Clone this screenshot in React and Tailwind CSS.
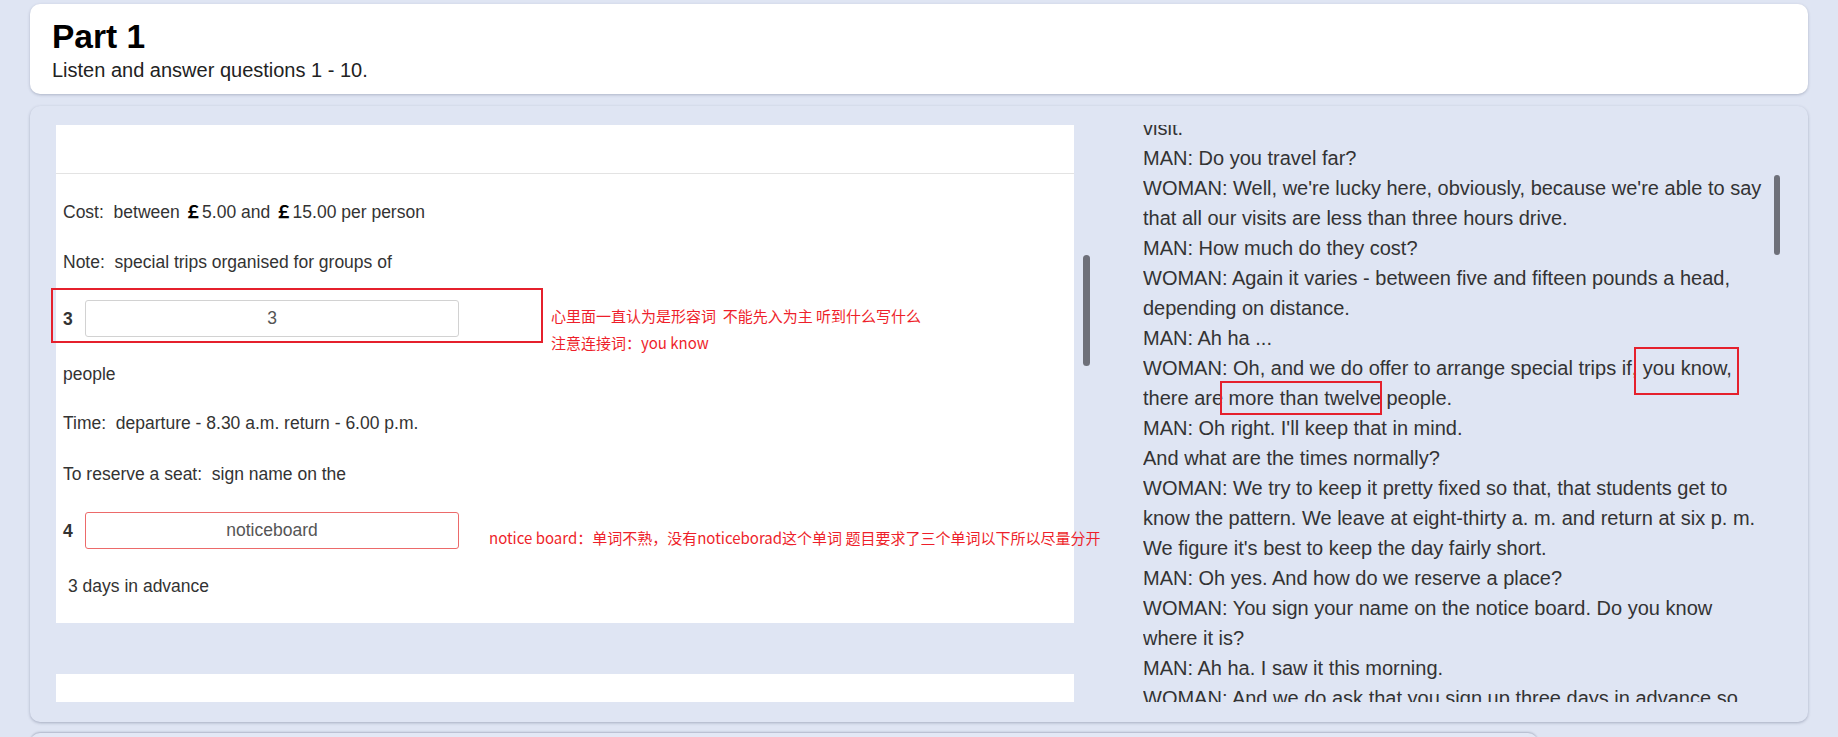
import React from "react";

const SANS = "font-['Liberation_Sans',Arial,sans-serif]";
const CJK = "font-['Noto_Sans_CJK_SC','Microsoft_YaHei',sans-serif]";

const transcript = [
  ["visit."],
  ["MAN: Do you travel far?"],
  [
    "WOMAN: Well, we're lucky here, obviously, because we're able to say",
    "that all our visits are less than three hours drive.",
  ],
  ["MAN: How much do they cost?"],
  [
    "WOMAN: Again it varies - between five and fifteen pounds a head,",
    "depending on distance.",
  ],
  ["MAN: Ah ha ..."],
  [
    "WOMAN: Oh, and we do offer to arrange special trips if, you know,",
    "there are more than twelve people.",
  ],
  ["MAN: Oh right. I'll keep that in mind.", "And what are the times normally?"],
  [
    "WOMAN: We try to keep it pretty fixed so that, that students get to",
    "know the pattern. We leave at eight-thirty a. m. and return at six p. m.",
    "We figure it's best to keep the day fairly short.",
  ],
  ["MAN: Oh yes. And how do we reserve a place?"],
  [
    "WOMAN: You sign your name on the notice board. Do you know",
    "where it is?",
  ],
  ["MAN: Ah ha. I saw it this morning."],
  ["WOMAN: And we do ask that you sign up three days in advance so"],
];

function AnswerRow({ num, value, wrong }) {
  return (
    <div className="flex items-center h-[37px]">
      <span className="w-[22px] font-bold">{num}</span>
      <input
        readOnly
        value={value}
        className={`w-[374px] h-[37px] rounded-[3px] border bg-white text-center text-[17.5px] text-[#555] outline-none ${
          wrong ? "border-[#ec6a6a]" : "border-[#d2d2d2]"
        }`}
      />
    </div>
  );
}

export default function App() {
  return (
    <div className={`${SANS} h-[737px] overflow-hidden bg-[#dfe5f3] px-[30px] pt-[4px]`}>
      {/* header */}
      <div className="h-[90px] rounded-[10px] bg-white pl-[22px] pt-[14px] shadow-[0_1px_3px_rgba(60,70,100,0.3)]">
        <h1 className="text-[33.5px] font-bold leading-[38px] text-black">Part 1</h1>
        <p className="mt-[3px] text-[20px] leading-[23px] text-[#222]">
          Listen and answer questions 1 - 10.
        </p>
      </div>

      {/* question card */}
      <div className="relative mt-[12px] flex h-[616px] rounded-[10px] bg-[#dfe5f3] pl-[26px] pt-[19px] shadow-[0_1px_3px_rgba(60,70,100,0.35)]">
        {/* left: questions */}
        <div className="relative h-[577px] w-[1040px] shrink-0 overflow-hidden">
          <div className="w-[1018px] bg-white text-[17.5px] leading-[20px] text-[#333]">
            <div className="h-[49px] border-b border-[#e3e3e3]" />
            <div className="pl-[7px] pt-[27px] pb-[27px]">
              <p className="whitespace-pre">
                Cost:  between <span className={`${CJK} font-semibold text-black`}>￡</span>5.00 and <span className={`${CJK} font-semibold text-black`}>￡</span>15.00 per person
              </p>
              <p className="mt-[30px] whitespace-pre">Note:  special trips organised for groups of</p>
              <div className="mt-[28px]">
                <AnswerRow num="3" value="3" />
              </div>
              <p className="mt-[27px]">people</p>
              <p className="mt-[29px] whitespace-pre">Time:  departure - 8.30 a.m. return - 6.00 p.m.</p>
              <p className="mt-[31px] whitespace-pre">To reserve a seat:  sign name on the</p>
              <div className="mt-[28px]">
                <AnswerRow num="4" value="noticeboard" wrong />
              </div>
              <p className="mt-[27px] pl-[5px]">3 days in advance</p>
            </div>
          </div>
          <div className="mt-[51px] h-[60px] w-[1018px] bg-white" />
          <div className="absolute left-[1027px] top-[130px] h-[111px] w-[7px] rounded-full bg-[#6e7079]" />
        </div>

        {/* right: transcript */}
        <div className="relative ml-[47px] h-[577px] w-[640px] overflow-hidden">
          <div className="-mt-[12px] whitespace-nowrap text-[20px] leading-[30px] text-[#333]">
            {transcript.map((lines, i) => (
              <p key={i}>
                {lines.map((l, j) => (
                  <React.Fragment key={j}>
                    {j > 0 && <br />}
                    {l}
                  </React.Fragment>
                ))}
              </p>
            ))}
          </div>
          <div className="absolute left-[631px] top-[50px] h-[80px] w-[6px] rounded-full bg-[#6e7079]" />
        </div>

        {/* annotations drawn over the page */}
        <div className="absolute left-[21px] top-[182px] h-[55px] w-[492px] border-2 border-[#e5202c]" />
        <div className="absolute left-[1190px] top-[275px] h-[34px] w-[162px] border-2 border-[#e5202c]" />
        <div className="absolute left-[1604px] top-[241px] h-[48px] w-[105px] border-2 border-[#e5202c]" />
        <div className={`${CJK} absolute left-[521px] top-[196px] whitespace-pre text-[15px] leading-[27px] text-[#ee1f2b]`}>
          <p>心里面一直认为是形容词  不能先入为主 听到什么写什么</p>
          <p>注意连接词：you know</p>
        </div>
        <div className={`${CJK} absolute left-[459px] top-[418px] whitespace-pre text-[15px] leading-[27px] text-[#ee1f2b]`}>
          notice board：单词不熟，没有noticeborad这个单词 题目要求了三个单词以下所以尽量分开
        </div>
      </div>

      {/* next card peeking */}
      <div className="mt-[11px] h-[40px] w-[1508px] rounded-[10px] bg-[#e3e8f5] shadow-[0_-1px_2px_rgba(60,70,100,0.3)]" />
    </div>
  );
}
